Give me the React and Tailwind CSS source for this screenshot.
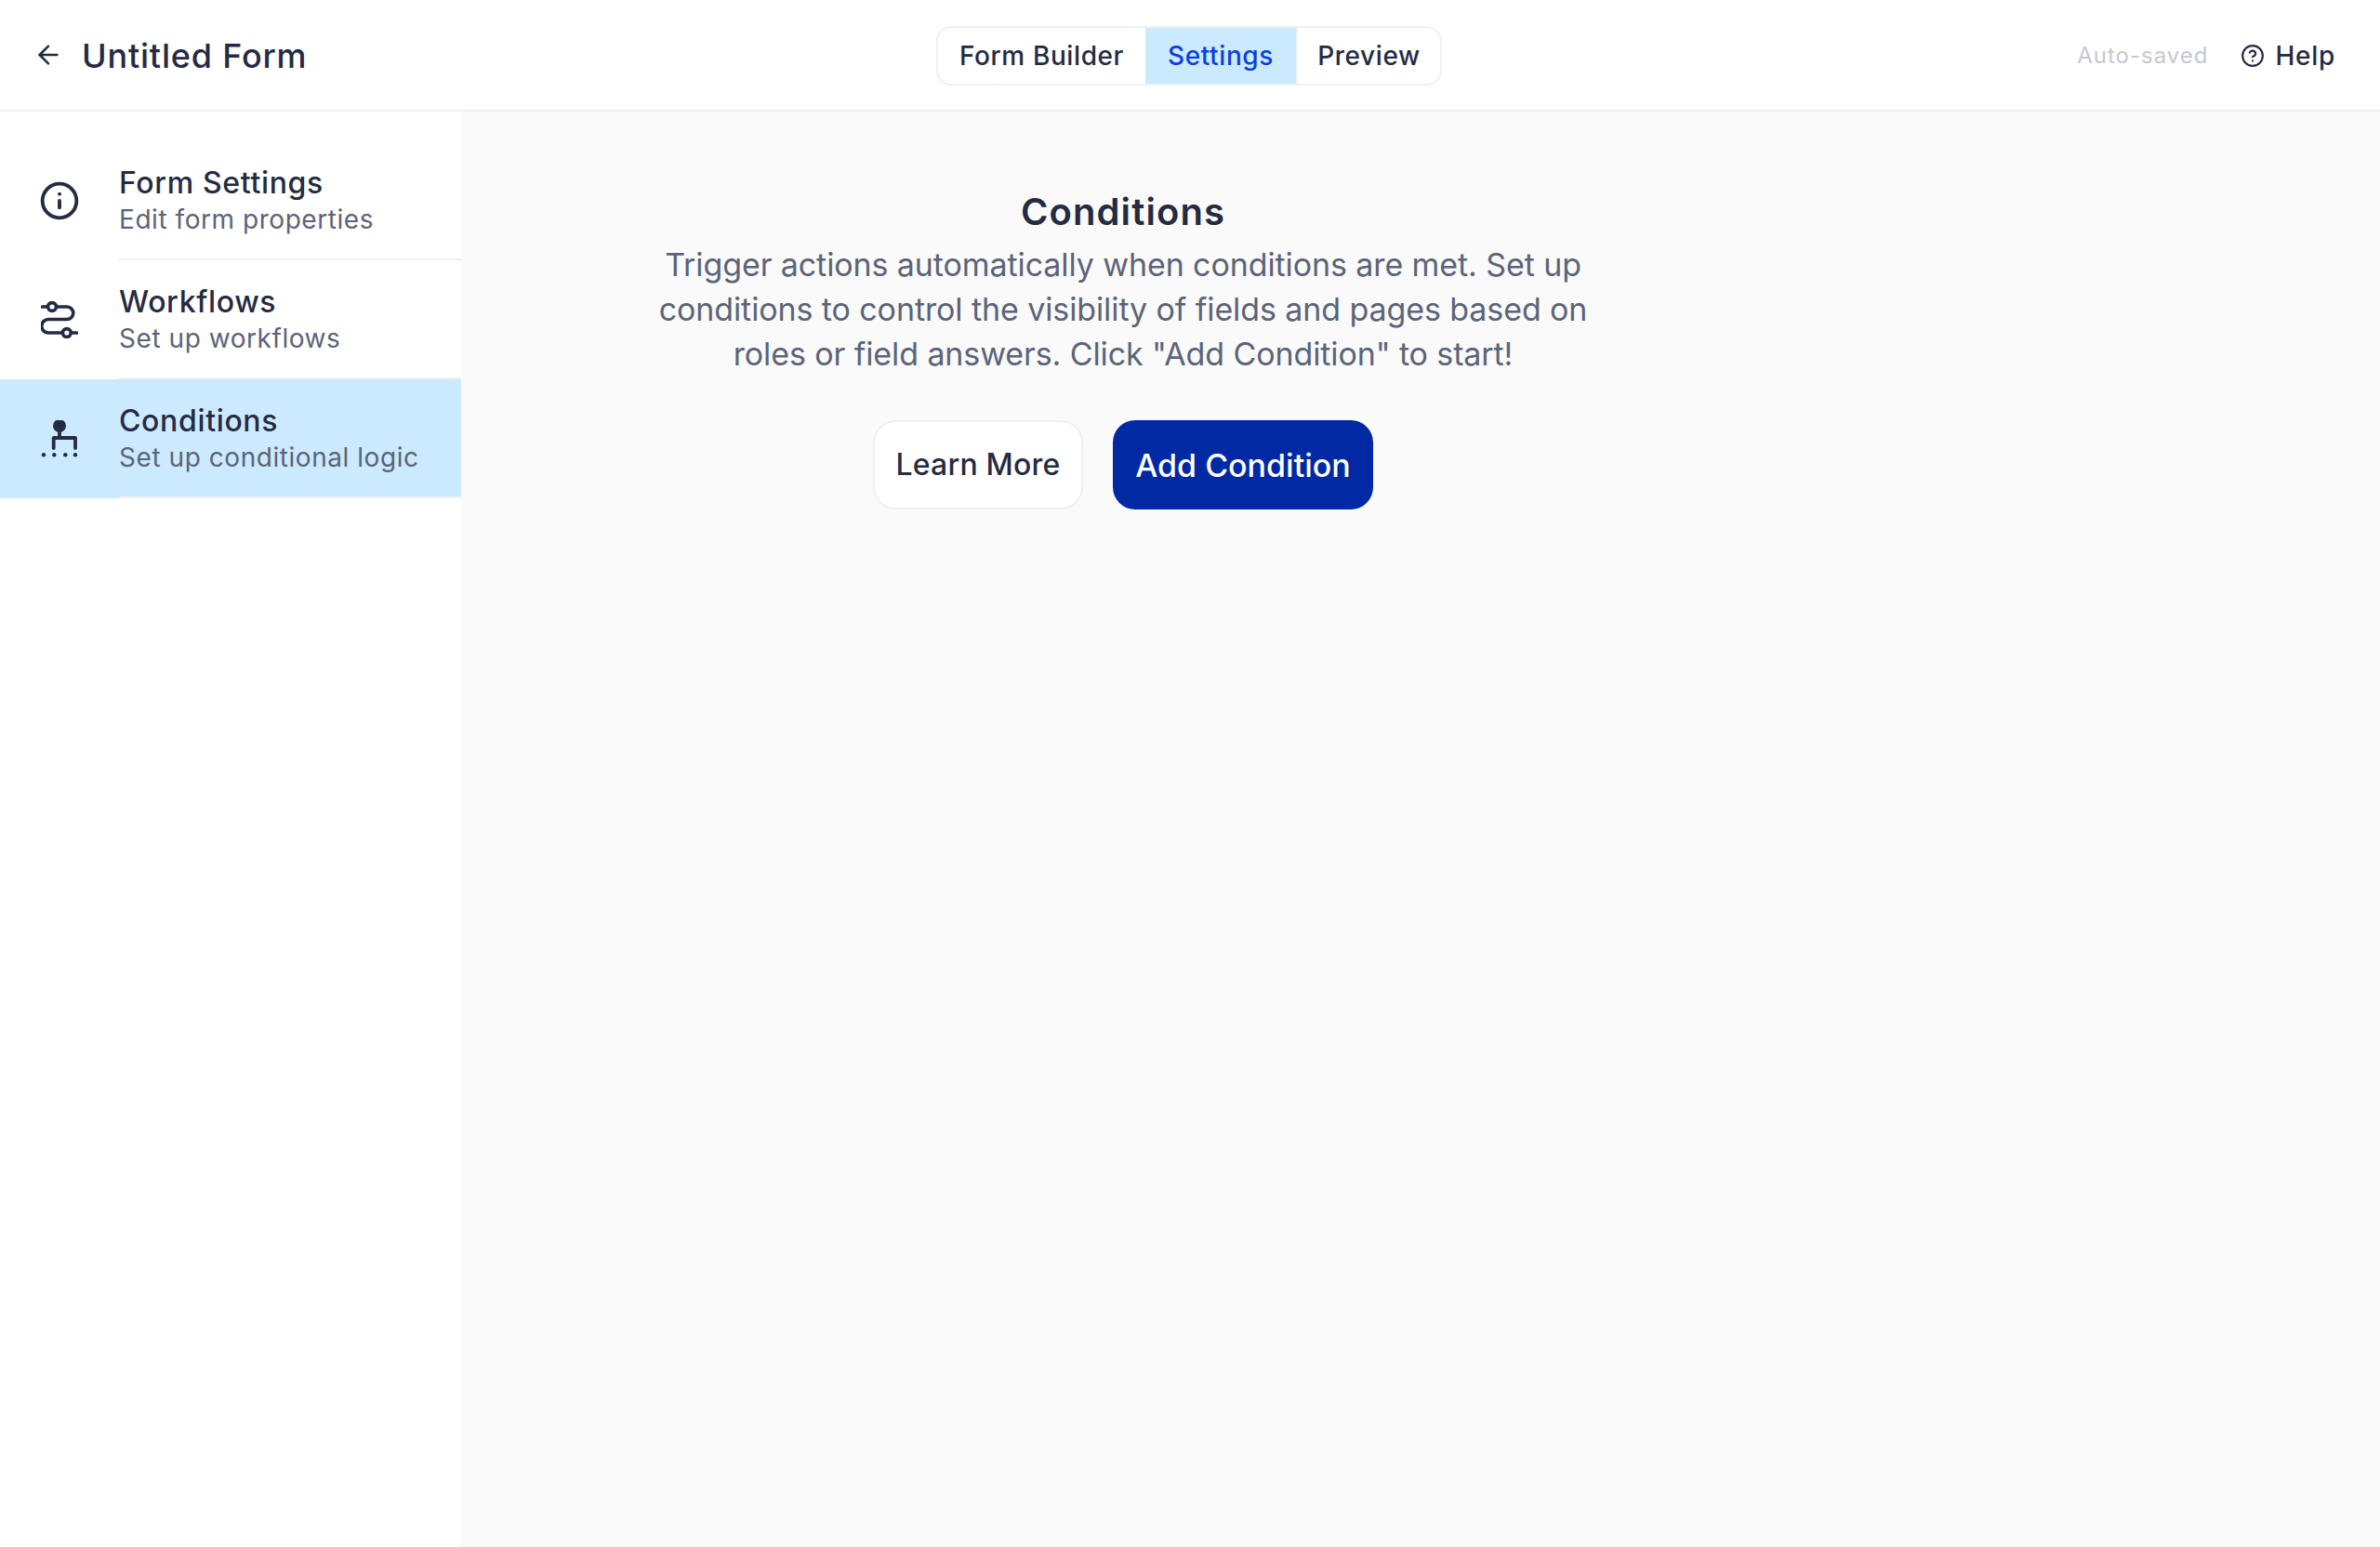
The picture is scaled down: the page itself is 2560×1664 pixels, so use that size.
import { ArrowLeft, Info, CircleHelp } from 'lucide-react';

function WorkflowIcon() {
  return (
    <svg width="40" height="40" viewBox="0 0 40 40" fill="none" stroke="#252b42" strokeWidth="3.6" strokeLinecap="round">
      <path d="M1.5 6H28a6.75 6.75 0 0 1 0 13.5H8a7.25 7.25 0 0 0 0 14.5H38.5" />
      <circle cx="12" cy="6" r="4.4" fill="#fff" />
      <circle cx="27.8" cy="34" r="4.4" fill="#fff" />
    </svg>
  );
}

function ConditionIcon() {
  return (
    <svg width="40" height="40" viewBox="0 0 40 40" fill="none" stroke="#252b42" strokeWidth="3.8" strokeLinecap="round" strokeLinejoin="round">
      <path d="M20 6V19M13.7 30V19H37V30" />
      <circle cx="20" cy="6" r="7" fill="#252b42" stroke="none" />
      <g fill="#252b42" stroke="none">
        <circle cx="3" cy="37.3" r="2.2" />
        <circle cx="14.3" cy="37.3" r="2.2" />
        <circle cx="26.3" cy="37.3" r="2.2" />
        <circle cx="37" cy="37.3" r="2.2" />
      </g>
    </svg>
  );
}

const sideItems = [
  { title: 'Form Settings', sub: 'Edit form properties', icon: <Info size={44} strokeWidth={2.1} color="#252b42" /> },
  { title: 'Workflows', sub: 'Set up workflows', icon: <WorkflowIcon /> },
  { title: 'Conditions', sub: 'Set up conditional logic', icon: <ConditionIcon />, active: true },
];

function SideItem({ title, sub, icon, active }) {
  return (
    <div className={`flex h-[128px] ${active ? 'bg-[#cceaff]' : ''}`}>
      <div className="flex w-[128px] shrink-0 items-center justify-center">{icon}</div>
      <div className="flex flex-1 flex-col justify-center border-b-2 border-[#f0f0f0] pt-[2px]">
        <div className="text-[32px] leading-[40px] font-medium tracking-[0.65px] text-[#252b42]">{title}</div>
        <div className="text-[28px] leading-[38px] tracking-[0.55px] text-[#5b6478]">{sub}</div>
      </div>
    </div>
  );
}

export default function App() {
  return (
    <div className="flex h-[1664px] w-[2560px] flex-col bg-white font-['Inter','Liberation_Sans',sans-serif]">
      <header className="relative flex h-[120px] shrink-0 items-center justify-between border-b-2 border-[#f0f0f0] pr-[48px] pl-[36px]">
        <div className="flex items-center gap-[20px]">
          <ArrowLeft size={32} strokeWidth={1.9} color="#252b42" />
          <span className="pt-[2px] text-[36px] font-medium tracking-[0.8px] text-[#252b42]">Untitled Form</span>
        </div>
        <div className="absolute top-[28px] left-[1007px] flex h-[64px] overflow-hidden rounded-[16px] border-2 border-[#f0f0f0] text-[28px] font-medium tracking-[0.6px] text-[#252b42]">
          <div className="flex w-[223px] items-center justify-center">Form Builder</div>
          <div className="flex w-[162px] items-center justify-center bg-[#cceaff] text-[#0a3fe0]">Settings</div>
          <div className="flex w-[155px] items-center justify-center border-l-2 border-[#f0f0f0]">Preview</div>
        </div>
        <div className="flex items-center pt-[2px]">
          <span className="mr-[34px] text-[24px] tracking-[1px] text-[#c6c8d2]">Auto-saved</span>
          <CircleHelp size={26} strokeWidth={2} color="#252b42" />
          <span className="ml-[12px] text-[28px] font-medium tracking-[0.7px] text-[#252b42]">Help</span>
        </div>
      </header>
      <div className="flex flex-1">
        <aside className="w-[496px] shrink-0 bg-white pt-[32px]">
          {sideItems.map((item) => (
            <SideItem key={item.title} {...item} />
          ))}
        </aside>
        <main className="flex-1 bg-[#fafafa] pt-[84px] pl-[203px]">
          <div className="flex w-[1018px] flex-col items-center text-center">
            <h1 className="text-[40px] leading-[48px] font-semibold tracking-[1.1px] text-[#252b42]">Conditions</h1>
            <p className="mt-[9px] text-[34px] leading-[48px] tracking-[-0.1px] whitespace-nowrap text-[#5b6478]">
              Trigger actions automatically when conditions are met. Set up
              <br />
              conditions to control the visibility of fields and pages based on
              <br />
              roles or field answers. Click "Add Condition" to start!
            </p>
            <div className="mt-[47px] flex items-center gap-[32px] font-medium">
              <button className="flex h-[96px] w-[226px] items-center justify-center rounded-[24px] border-2 border-[#f0f0f0] bg-white text-[32px] tracking-[0.2px] text-[#252b42]">
                Learn More
              </button>
              <button className="flex h-[96px] w-[280px] items-center justify-center rounded-[24px] bg-[#0029a3] text-[34px] text-white">
                Add Condition
              </button>
            </div>
          </div>
        </main>
      </div>
    </div>
  );
}
